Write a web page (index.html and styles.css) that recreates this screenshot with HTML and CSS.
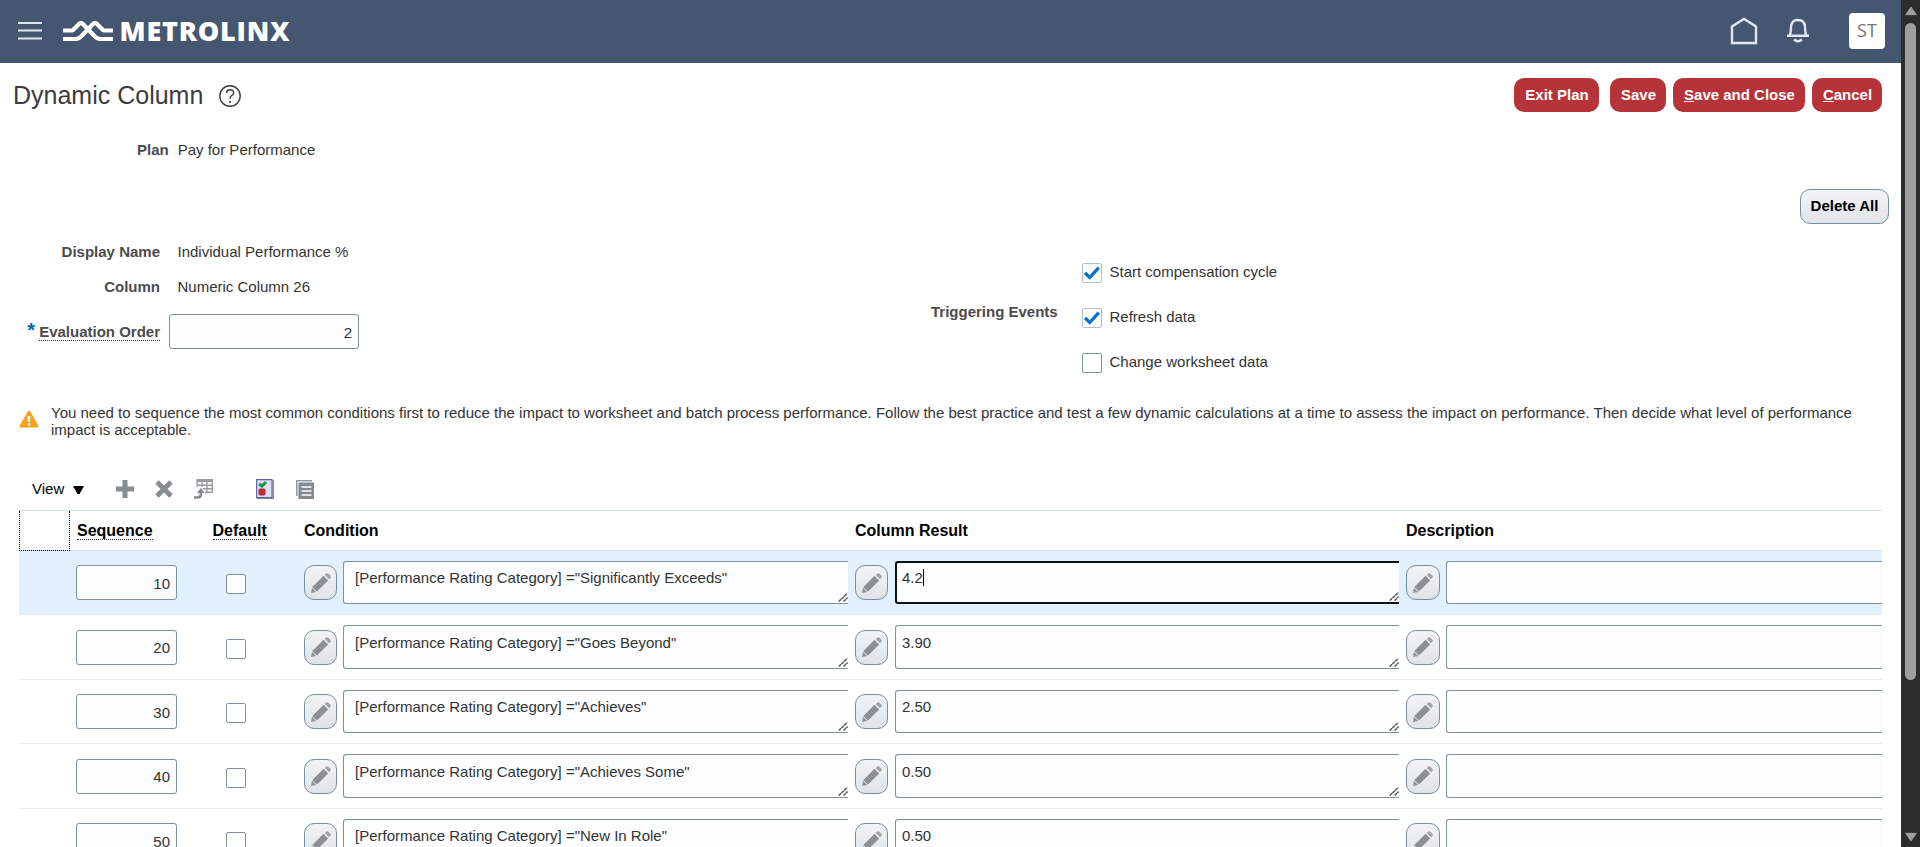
FILE: index.html
```html
<!DOCTYPE html>
<html lang="en">
<head>
<meta charset="utf-8">
<title>Dynamic Column</title>
<link rel="stylesheet" href="styles.css">
</head>
<body>
<svg class="defs" aria-hidden="true">
  <symbol id="pencil" viewBox="0 0 20 20">
    <path d="M0 20 L1 14.800 L5.200 19 Z" fill="#8f9498"/>
    <path d="M1.300 14 L12.600 2.800 L17.200 7.400 L6 18.600 Z" fill="#8b9094"/>
    <path d="M13.800 1.900 L15.200 .600 Q16.400 -.300 17.400 .700 L19.300 2.600 Q20.300 3.600 19.400 4.800 L18.100 6.200 Z" fill="#9fa4a7"/>
  </symbol>
  <symbol id="tick" viewBox="0 0 16 14">
    <path d="M1 7 L5.700 11.500 L14.800 1.700" fill="none" stroke="#0572ce" stroke-width="3.300"/>
  </symbol>
  <symbol id="grip" viewBox="0 0 10 9">
    <path d="M.8 8.5 L9.2 .5 M5.6 8.5 L9.6 4.6" fill="none" stroke="#555" stroke-width="1.500" stroke-dasharray="3.2 .5"/>
  </symbol>
</svg>
<div class="window">
  <div class="page">
    <header class="topbar">
      <svg class="menu" width="24" height="19" viewBox="0 0 24 19"><path d="M0 2H24M0 9.500H24M0 17.500H24" stroke="#dfe6f1" stroke-width="2.200"/></svg>
      <svg class="logo" width="230" height="34" viewBox="0 0 230 34">
        <g fill="none" stroke="#fff" stroke-width="4.200" stroke-linejoin="bevel">
          <path d="M0 15.500H9.500L16 9Q18 7 20 9L31 20.500Q34 24 37 24H50"/>
          <path d="M0 24H13Q16 24 19 20.500L30 9Q32 7 34 9L40.500 15.500H50"/>
        </g>
        <text class="wordmark" x="56.500" y="25.500" textLength="170" lengthAdjust="spacing">METROLINX</text>
      </svg>
      <div class="tools">
        <svg class="home" width="28" height="28" viewBox="0 0 28 28"><path d="M2 26V9.500L14 2L26 9.500V26Z" fill="none" stroke="#dfe6f1" stroke-width="2.400"/></svg>
        <svg class="bell" width="22" height="26" viewBox="0 0 22 26"><path d="M0 17.700H22M2.500 17.500Q4 15 4 9.500Q4 2 11 2Q18 2 18 9.500Q18 15 19.500 17.500M7 21.500Q11 25 15 21.500" fill="none" stroke="#dfe6f1" stroke-width="2.400"/></svg>
        <div class="avatar">ST</div>
      </div>
    </header>

    <div class="titlebar">
      <h1>Dynamic Column</h1>
      <svg class="help" width="22" height="22" viewBox="0 0 22 22"><circle cx="11" cy="11" r="10.200" fill="none" stroke="#3c3c3c" stroke-width="1.400"/><path d="M7.600 8Q7.600 4.800 11 4.800Q14.600 4.800 14.600 7.900Q14.600 9.600 12.600 10.700Q11 11.600 11 13.800" fill="none" stroke="#3c3c3c" stroke-width="1.400"/><circle cx="11" cy="16.800" r="1.100" fill="#3c3c3c"/></svg>
      <div class="actions">
        <button class="btn red exit">Exit Plan</button>
        <button class="btn red save">Save</button>
        <button class="btn red close"><u>S</u>ave and Close</button>
        <button class="btn red cancel"><u>C</u>ancel</button>
      </div>
    </div>

    <div class="plan"><span class="label">Plan</span><span>Pay for Performance</span></div>
    <div class="delete-row"><button class="btn grey">Delete All</button></div>

    <div class="form">
      <div class="fields">
        <div class="label name">Display Name</div><div class="value name">Individual Performance %</div>
        <div class="label column">Column</div><div class="value">Numeric Column 26</div>
        <div class="label order"><span class="star">*</span><span class="hint">Evaluation Order</span></div><div class="box number">2</div>
      </div>
      <div class="label events">Triggering Events</div>
      <div class="checks">
        <div class="check"><span class="cb on"><svg><use href="#tick"/></svg></span><span>Start compensation cycle</span></div>
        <div class="check"><span class="cb on"><svg><use href="#tick"/></svg></span><span>Refresh data</span></div>
        <div class="check"><span class="cb"></span><span>Change worksheet data</span></div>
      </div>
    </div>

    <div class="warning">
      <svg width="20" height="18" viewBox="0 0 20 18"><path d="M10 .8Q10.900 .8 11.500 2L19.300 15.500Q20 17.500 18.300 17.500H1.700Q0 17.500 .7 15.500L8.500 2Q9.100 .8 10 .8Z" fill="#f5a11c"/><path d="M10 6V11.800M10 13.200V15.500" stroke="#fff" stroke-width="2.600"/></svg>
      <p>You need to sequence the most common conditions first to reduce the impact to worksheet and batch process performance. Follow the best practice and test a few dynamic calculations at a time to assess the impact on performance. Then decide what level of performance impact is acceptable.</p>
    </div>

    <div class="toolbar">
      <span>View</span>
      <svg class="caret" width="11" height="9" viewBox="0 0 11 9"><path d="M0 0H11L6.500 8H4.500Z"/></svg>
      <svg class="plus" width="18" height="18" viewBox="0 0 18 18"><path d="M9 0V18M0 9H18" stroke="#888d90" stroke-width="5"/></svg>
      <svg class="cross" width="18" height="18" viewBox="0 0 18 18"><path d="M2 2L16 16M16 2L2 16" stroke="#888d90" stroke-width="4.800"/></svg>
      <svg class="detach" width="19" height="20" viewBox="0 0 19 20"><path d="M2.500 0H19V3H2.500Z" fill="#999da0"/><path d="M3.200 2V8M18.300 2V13.300H11M3.200 6.300H18.300M8.500 9.800H18.300M8 3V8M13 3V13.300" fill="none" stroke="#999da0" stroke-width="1.400"/><path d="M0 18.500H3.500Q6.800 18.500 6.800 15.500V12" fill="none" stroke="#84898d" stroke-width="2.600"/><path d="M3 14L6.800 9L10.600 14Z" fill="#84898d"/></svg>
      <svg class="status" width="18" height="20" viewBox="0 0 18 20"><path d="M0 0H16.500V19H0Z" fill="#dedef6"/><path d="M16.500 1H18V20H1V19H16.500Z" fill="#8c8c94"/><path d="M.6 .6H16V18.700H.6Z" fill="none" stroke="#6566a8" stroke-width="1.200"/><path d="M3 5L6 7L10 3.200" fill="none" stroke="#139a3c" stroke-width="3"/><rect x="3" y="10" width="6" height="6" rx="1" fill="#c42a31" stroke="#a03034"/></svg>
      <svg class="list" width="18" height="19" viewBox="0 0 18 19"><path d="M.8 16V.8H16" fill="none" stroke="#969a9d" stroke-width="1.600"/><rect x="2.500" y="2.500" width="15.500" height="16.500" fill="#84898d"/><path d="M5.500 7H15.500M5.500 11H15.500M5.500 15H15.500" stroke="#fff" stroke-width="1.500"/></svg>
    </div>

    <div class="table">
      <div class="row head">
        <div class="corner"></div><div class="seq"><span class="hint">Sequence</span></div><div class="def"><span class="hint">Default</span></div><div>Condition</div><div>Column Result</div><div>Description</div>
      </div>
      <div class="row selected">
        <div></div><div class="seq"><div class="box number">10</div></div><div class="def"><span class="cb"></span></div>
        <div class="edit"><button class="pen"><svg><use href="#pencil"/></svg></button><div class="area formula">[Performance Rating Category] ="Significantly Exceeds"<svg class="grip"><use href="#grip"/></svg></div></div>
        <div class="edit result"><button class="pen"><svg><use href="#pencil"/></svg></button><div class="area focused"><span class="typed">4.2</span><svg class="grip"><use href="#grip"/></svg></div></div>
        <div class="edit"><button class="pen"><svg><use href="#pencil"/></svg></button><div class="area"></div></div>
      </div>
      <div class="row even">
        <div></div><div class="seq"><div class="box number">20</div></div><div class="def"><span class="cb"></span></div>
        <div class="edit"><button class="pen"><svg><use href="#pencil"/></svg></button><div class="area formula">[Performance Rating Category] ="Goes Beyond"<svg class="grip"><use href="#grip"/></svg></div></div>
        <div class="edit result"><button class="pen"><svg><use href="#pencil"/></svg></button><div class="area">3.90<svg class="grip"><use href="#grip"/></svg></div></div>
        <div class="edit"><button class="pen"><svg><use href="#pencil"/></svg></button><div class="area"></div></div>
      </div>
      <div class="row">
        <div></div><div class="seq"><div class="box number">30</div></div><div class="def"><span class="cb"></span></div>
        <div class="edit"><button class="pen"><svg><use href="#pencil"/></svg></button><div class="area formula">[Performance Rating Category] ="Achieves"<svg class="grip"><use href="#grip"/></svg></div></div>
        <div class="edit result"><button class="pen"><svg><use href="#pencil"/></svg></button><div class="area">2.50<svg class="grip"><use href="#grip"/></svg></div></div>
        <div class="edit"><button class="pen"><svg><use href="#pencil"/></svg></button><div class="area"></div></div>
      </div>
      <div class="row even">
        <div></div><div class="seq"><div class="box number">40</div></div><div class="def"><span class="cb"></span></div>
        <div class="edit"><button class="pen"><svg><use href="#pencil"/></svg></button><div class="area formula">[Performance Rating Category] ="Achieves Some"<svg class="grip"><use href="#grip"/></svg></div></div>
        <div class="edit result"><button class="pen"><svg><use href="#pencil"/></svg></button><div class="area">0.50<svg class="grip"><use href="#grip"/></svg></div></div>
        <div class="edit"><button class="pen"><svg><use href="#pencil"/></svg></button><div class="area"></div></div>
      </div>
      <div class="row">
        <div></div><div class="seq"><div class="box number">50</div></div><div class="def"><span class="cb"></span></div>
        <div class="edit"><button class="pen"><svg><use href="#pencil"/></svg></button><div class="area formula">[Performance Rating Category] ="New In Role"<svg class="grip"><use href="#grip"/></svg></div></div>
        <div class="edit result"><button class="pen"><svg><use href="#pencil"/></svg></button><div class="area">0.50<svg class="grip"><use href="#grip"/></svg></div></div>
        <div class="edit"><button class="pen"><svg><use href="#pencil"/></svg></button><div class="area"></div></div>
      </div>
    </div>
  </div>
  <div class="scrollbar">
    <svg width="12" height="10" viewBox="0 0 12 10"><path d="M6 1L11.300 8.700H.7Z" fill="#9f9f9f" stroke="#9f9f9f" stroke-linejoin="round"/></svg>
    <div class="thumb"></div>
    <svg width="12" height="10" viewBox="0 0 12 10"><path d="M6 9L11.300 1.300H.7Z" fill="#9f9f9f" stroke="#9f9f9f" stroke-linejoin="round"/></svg>
  </div>
</div>
</body>
</html>
```
FILE: styles.css
```css
* { box-sizing: border-box; }
body {
  margin: 0;
  font: 15px/17px "Liberation Sans", Arial, sans-serif;
  color: #333;
  background: #fff;
  overflow: hidden;
}
.defs { display: none; }
svg { display: block; flex: none; }
.window { display: flex; height: 847px; overflow: hidden; }
.page { width: 1901px; height: 847px; overflow: hidden; }

/* Top bar */
.topbar { height: 63px; background: #455670; display: flex; align-items: flex-start; padding-left: 18px; }
.menu { margin-top: 21px; }
.logo { margin: 15px 0 0 21px; overflow: visible; }
.wordmark { font: 800 27px "Open Sans", Lato, sans-serif; fill: #fff; }
.tools { margin-left: auto; display: flex; padding-right: 16px; }
.home { margin-top: 17px; }
.bell { margin: 18px 40px 0 29px; }
.avatar {
  width: 36px; height: 36px; margin-top: 13px; border-radius: 4px;
  background: #fff; color: #757575; text-align: center;
  font: 18px/35px "Open Sans", sans-serif;
}

/* Title and actions */
.titlebar { display: flex; height: 49px; padding: 15px 19px 0 13px; }
h1 { margin: 2px 16px 0 0; font-size: 25px; line-height: 30px; font-weight: 400; color: #3c3c3c; width: 190px; white-space: nowrap; }
.help { margin-top: 7px; }
.actions { margin-left: auto; display: flex; }
.btn {
  height: 34px; padding: 0 0 2px 1px; border: 0; border-radius: 10px;
  font: bold 15px/17px "Liberation Sans", Arial, sans-serif;
}
.red { background: #b63439; color: #fff; }
.exit { width: 85px; margin-right: 11px; }
.save { width: 56px; margin-right: 7px; }
.close { width: 132px; margin-right: 7px; }
.cancel { width: 70px; }
.grey { width: 89px; height: 35px; padding-left: 0; border: 1px solid #758fa3; color: #000; background: linear-gradient(#f2f4f5, #e0e4e8); }
.label { font-weight: bold; color: #4b4b4b; }
.plan { display: flex; gap: 9px; padding: 29px 0 0 137px; height: 77px; }
.delete-row { display: flex; justify-content: flex-end; padding-right: 12px; height: 35px; }

/* Form */
.form { display: flex; height: 178px; }
.fields { display: grid; grid-template-columns: 160px 190px; grid-template-rows: 54px 36px 35px; column-gap: 9px; align-content: start; width: 931px; }
.fields .label { text-align: right; white-space: nowrap; }
.fields .name { padding-top: 19px; }
.value { padding-left: 8.500px; }
.fields .label.order { padding-top: 9px; }
.star { color: #0066b3; font-size: 20px; line-height: 10px; margin-right: 4px; }
.hint { border-bottom: 1px dotted #333; }
.box { height: 35px; border: 1px solid #7d919f; border-radius: 3px; background: #fcfdfe; }
.number { text-align: right; padding: 9px 6px 0 0; }
.events { width: 151px; padding-top: 79px; }
.checks { display: flex; flex-direction: column; gap: 25px; padding-top: 39px; }
.check { display: flex; gap: 7.500px; height: 20px; }
.cb { display: block; width: 20px; height: 20px; border: 1px solid #7d919f; border-radius: 2px; background: #fff; }
.on { border-color: #b3bfc8; background: #fcfdfe; padding: 2px 1px; }
.on svg { width: 16px; height: 14px; }

/* Warning */
.warning { display: flex; padding: 2px 36px 0 19px; height: 73px; }
.warning svg { margin: 6px 12px 0 0; }
.warning p { margin: 0; }

/* Toolbar */
.toolbar { display: flex; align-items: flex-start; height: 35px; padding: 4px 0 0 32px; color: #000; }
.toolbar > span { width: 41px; margin-top: 1px; }
.caret { margin: 7px 32px 0 0; }
.plus { margin: 1px 21px 0 0; }
.cross { margin: 1px 21px 0 0; }
.detach { margin-right: 43px; }
.status { margin-right: 22px; }
.list { margin-top: 1px; }

/* Table */
.table { margin-left: 19px; width: 1863px; border-top: 1px solid #d3dfe9; }
.row { display: grid; grid-template-columns: 51px 114px 114px 551px 551px 482px; height: 64px; border-bottom: 1px solid #ebebeb; }
.row.even { height: 65px; }
.row.selected { background: #e3f0fe; }
.row.head { height: 40px; font-size: 16px; line-height: 18px; font-weight: bold; color: #000; border-color: #d3dfe9; }
.row.head > div { padding: 11px 0 0 6px; }
.row.head .def { padding-left: 28.500px; }
.row.head .seq { padding-left: 7px; }
.row.head .corner { height: 40px; border: 1px dotted #000; border-top: 0; }
.seq .box { margin: 14px 0 0 6px; width: 101px; padding-top: 9px; }
.even .seq .box { margin-top: 15px; padding-top: 8px; }
.def .cb { margin: 23px 0 0 42px; }
.even .def .cb { margin-top: 24px; }
.edit { display: flex; padding: 10px 0 0 6px; overflow: hidden; }
.pen { width: 33px; height: 35px; margin: 4px 6px 0 0; padding: 7px 0 0 6px; border: 1px solid #758fa3; border-radius: 10px; background: linear-gradient(#f2f4f5, #e0e4e8); flex: none; display: flex; align-items: flex-start; }
.result .pen { margin-right: 7px; }
.edit:last-child .pen { width: 34px; }
.even .pen { margin-top: 5px; padding-top: 6px; }
.pen svg { width: 20px; height: 20px; }
.area { position: relative; flex: 1; height: 43px; padding: 7px 0 0 6px; border: 1px solid #7d919f; border-right: 0; border-radius: 3px 0 0 3px; background: #fcfdfe; margin-right: 1px; }
.edit:last-child .area { margin-right: 0; }
.even .area { height: 44px; padding-top: 8px; }
.area.formula { padding-left: 11px; }
.area.focused { border: 2px solid #101010; border-right: 0; padding: 6px 0 0 5px; }
.typed { border-right: 1px solid #000; }
.grip { position: absolute; right: 0; bottom: 1px; width: 10px; height: 9px; }

/* Scrollbar */
.scrollbar { width: 19px; background: #2c2c2c; display: flex; flex-direction: column; align-items: center; padding: 6px 0 5px 0; }
.thumb { width: 11px; height: 657px; margin: 7px 0 auto; border-radius: 6px; background: #9f9f9f; }
```
